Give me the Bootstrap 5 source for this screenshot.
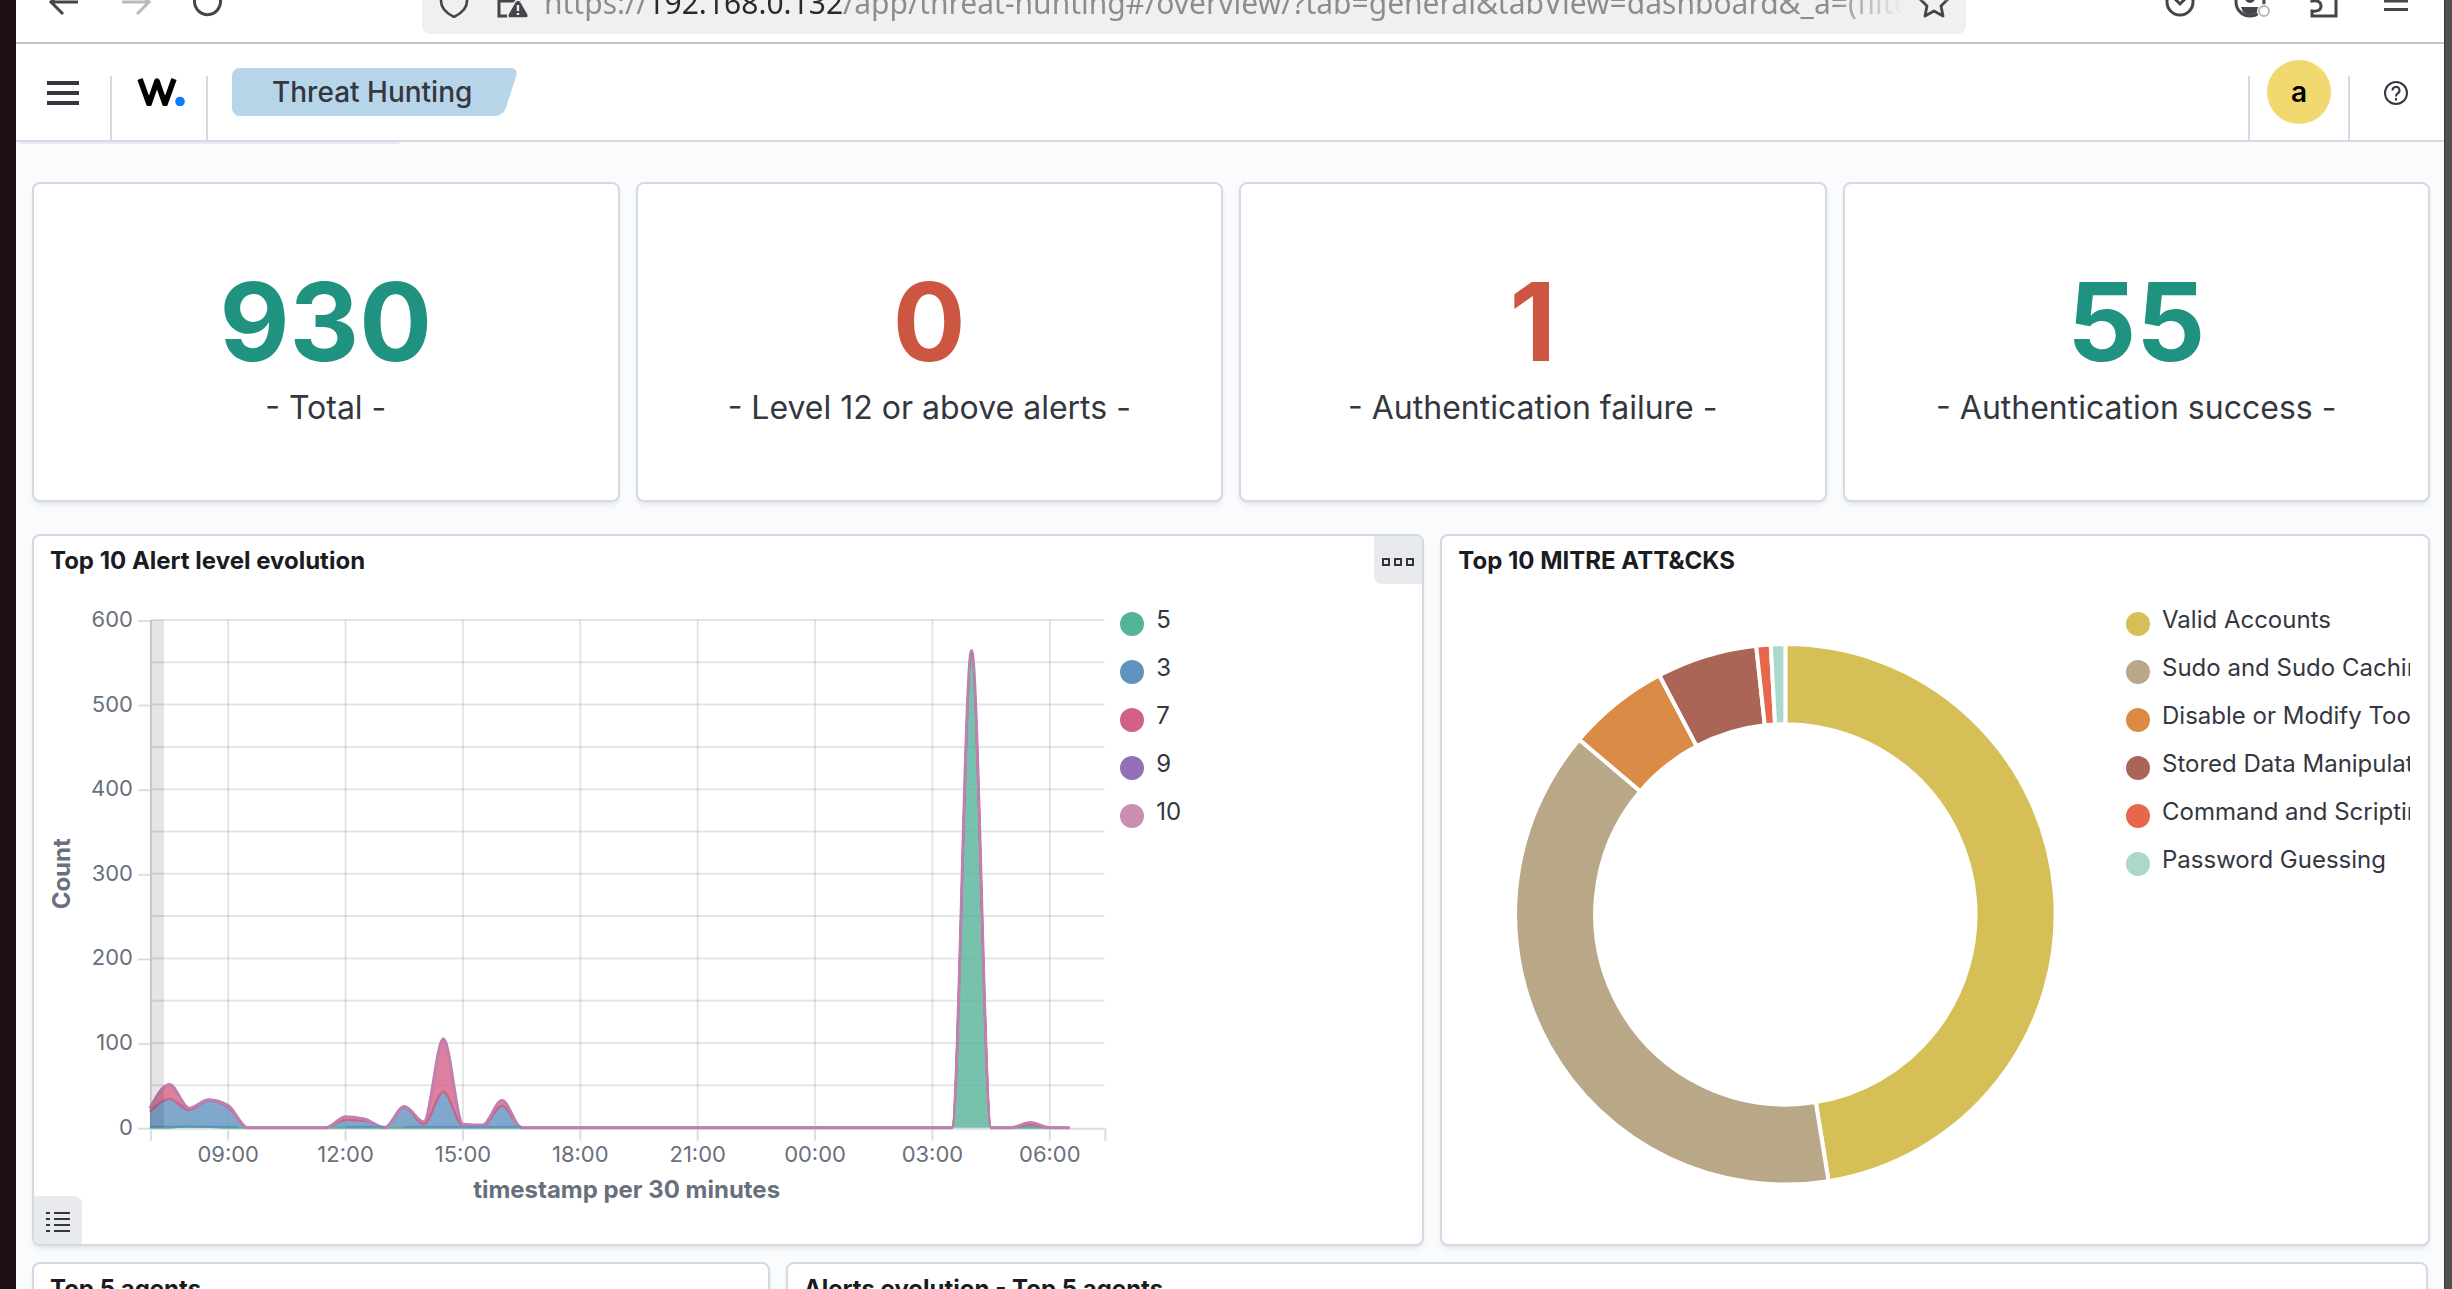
<!DOCTYPE html>
<html lang="en">
<head>
<meta charset="utf-8">
<meta name="viewport" content="width=device-width, initial-scale=1">
<title>Threat Hunting</title>
<link rel="stylesheet" href="https://cdn.jsdelivr.net/npm/bootstrap@5.3.0/dist/css/bootstrap.min.css">
<style>
  body { font-family: Inter, "Liberation Sans", sans-serif; color: #343741; background: #fff; }
  button { color: inherit; }
  .desktop { height: 100vh; background: #505050; border-left: 16px solid #1c1016; padding-right: 8px; }
  .browser { background: #fafbfd; box-shadow: 1px 0 0 #333; }

  /* browser toolbar */
  .toolbar { height: 44px; padding: 0 12px; border-bottom: 2px solid #c6c6c6; background: #fff; flex: none; }
  .tool { width: 72px; height: 64px; margin-bottom: 8px; padding: 0; border: 0; background: none; flex: none; color: #45454a; }
  .tool-off { color: #b9b9bb; }
  .address { height: 64px; margin: 0 178px 8px; padding: 0 16px; border-radius: 8px; background: #f0f0f0; min-width: 0; color: #45454a; }
  .address input {
    font: 30px/44px "Noto Sans", "Open Sans", sans-serif; border: 0; outline: 0; padding: 0; min-width: 0; height: 48px;
    color: transparent;
    background: linear-gradient(90deg, #8c8c8e 106px, #2a2a2e 106px, #2a2a2e 300px, #8c8c8e 300px, #8c8c8e 1290px, transparent 1360px);
    -webkit-background-clip: text; background-clip: text;
  }

  /* application header */
  .app-header { height: 98px; border-bottom: 2px solid #d3dae6; background: #fff; flex: none; }
  .app-header button { border: 0; background: none; padding: 0; }
  .menu-btn { width: 94px; height: 60px; padding-left: 2px; }
  .rule { width: 2px; height: 64px; background: #d3dae6; align-self: flex-end; }
  .brand-link { width: 94px; }
  .crumb { position: relative; isolation: isolate; margin-left: 24px; height: 48px; padding: 0 48px 0 40px;
    font-size: 28px; line-height: 48px; font-weight: 500; color: #343741; text-decoration: none; }
  .crumb::before, .crumb::after { content: ""; position: absolute; z-index: -1; top: 0; bottom: 0; background: #b6d5e9; border-radius: 8px; }
  .crumb::before { left: 0; right: 50%; }
  .crumb::after { left: 30%; right: 10px; transform: skewX(-18deg); }
  .avatar { width: 64px; height: 64px; border-radius: 50%; background: #f1d86f; color: #000; font-size: 28px; line-height: 64px; font-weight: 600; }
  .user-btn { width: 98px; }
  .help-btn { width: 94px; padding-right: 2px !important; }

  /* dashboard */
  .under-shadow { width: 380px; height: 2px; margin-left: 3px; background: #e9ebf1; }
  .board { padding: 38px 14px 0 16px; }
  .tile { background: #fff; border: 2px solid #d3dae6; border-radius: 8px; min-width: 0;
    box-shadow: 0 2px 4px -1px rgba(0,0,0,.08), 0 5px 8px -2px rgba(0,0,0,.05); }
  .gap-tiles { gap: 16px; }
  .stat-tile { flex: 1 1 0; height: 320px; padding-top: 16px; }
  .stat-value { font-size: 108px; line-height: 108px; font-weight: 700; color: #209280; }
  .stat-value.is-bad { color: #cc5642; }
  .stat-label { font-size: 32px; line-height: 48px; margin-top: 8px; }
  .vis-tile { position: relative; height: 712px; overflow: hidden; }
  .w-alert { flex: 1393 1 0; }
  .w-mitre { flex: 989 1 0; }
  .w-agents { flex: 736 1 0; }
  .w-evo { flex: 1643 1 0; margin-right: 2px; }
  .tile-title { margin: 0; padding: 2px 0 0 16px; font-size: 24px; line-height: 46px; font-weight: 700; color: #1a1c21; }
  .tile-opt { position: absolute; width: 48px; height: 48px; padding: 0; border: 0; background: #e9eaec; }
  .opt-menu { top: 0; right: 0; border-radius: 0 6px 0 8px; line-height: 40px; }
  .opt-legend { bottom: 0; left: 0; border-radius: 0 8px 0 6px; line-height: 40px; }
  .plot { flex: 1 1 0; min-width: 0; }
  .plot svg { width: 100%; height: auto; display: block; }
  .legend-list { margin: 16px 0 0; padding: 0 0 0 12px; list-style: none; font-size: 24px; }
  .legend-a { width: 314px; }
  .legend-m { width: 296px; margin-right: 18px; }
  .legend-list li { height: 48px; overflow: hidden; white-space: nowrap; }
  .legend-list i { width: 24px; height: 24px; border-radius: 50%; flex: none; margin-right: 12px; }
  .legend-list span { padding-bottom: 8px; }
  .tick-text { font: 22px Inter, sans-serif; fill: #69707d; }
  .axis-title { font: 700 24px Inter, sans-serif; fill: #69707d; }
</style>
<script src="https://cdn.jsdelivr.net/npm/bootstrap@5.3.0/dist/js/bootstrap.bundle.min.js"></script>
</head>
<body>
<div class="desktop overflow-hidden">
<div class="browser d-flex flex-column h-100 overflow-hidden">

  <div class="toolbar d-flex align-items-end overflow-hidden">
    <button class="tool" aria-label="Back"><svg width="32" height="32" fill="none" stroke="currentColor" stroke-width="3"><path d="M30 16H3M15 4 3 16l12 12"/></svg></button>
    <button class="tool tool-off" aria-label="Forward"><svg width="32" height="32" fill="none" stroke="currentColor" stroke-width="3"><path d="M2 16h27M17 4l12 12-12 12"/></svg></button>
    <button class="tool" aria-label="Reload"><svg width="32" height="32" fill="none" stroke="currentColor" stroke-width="3"><path d="M28 12a13 13 0 1 1-5-7M28 2v10H18"/></svg></button>
    <div class="address flex-grow-1 d-flex align-items-center">
      <svg width="32" height="32" fill="none" stroke="currentColor" stroke-width="2.6"><path d="M16 2 3 7v8c0 7 5 12 13 16 8-4 13-9 13-16V7z"/></svg>
      <svg class="ms-4" width="34" height="34" fill="none" stroke="currentColor" stroke-width="3"><path d="M13 31H5V16h22M9 15V9a6 6 0 0 1 12 0v6"/><path fill="currentColor" stroke="#f0f0f0" stroke-width="1.5" d="M24 15q2 0 3 2l7 12q1 4-2 4H16q-3 0-2-4l7-12q1-2 3-2z"/><path stroke="#f0f0f0" stroke-width="2.4" d="M24 20v6M24 28v2"/></svg>
      <input class="flex-grow-1 ms-3" aria-label="Address" value="https://192.168.0.132/app/threat-hunting#/overview/?tab=general&amp;tabView=dashboard&amp;_a=(filters">
      <svg width="32" height="32" fill="none" stroke="currentColor" stroke-width="2.800" stroke-linejoin="round"><path d="m16 3 4 9 10 1-7 7 2 10-9-5-9 5 2-10-7-7 10-1z"/></svg>
    </div>
    <button class="tool" aria-label="Save to Pocket"><svg width="32" height="32" fill="none" stroke="currentColor" stroke-width="3"><path d="M3 4h26v12a13 13 0 0 1-26 0zM10 12l6 6 6-6"/></svg></button>
    <button class="tool" aria-label="Account"><svg width="38" height="34" fill="none"><circle cx="17" cy="17" r="14" stroke="currentColor" stroke-width="3"/><circle cx="17" cy="13" r="5" fill="currentColor"/><path d="M8 22h18l-2 5q-7 6-14 0z" fill="currentColor"/><circle cx="31" cy="26" r="7" fill="#fff"/><circle cx="31" cy="26" r="5" stroke="#b9b9bb" stroke-width="2"/></svg></button>
    <button class="tool" aria-label="Extensions"><svg width="32" height="34" fill="none" stroke="currentColor" stroke-width="3"><path d="M4 9h7V6a4 4 0 0 1 8 0v3h9v22H4v-5q9 1 9-5t-9-5z"/></svg></button>
    <button class="tool" aria-label="Menu"><svg width="24" height="32" fill="none" stroke="currentColor" stroke-width="3"><path d="M0 7h24M0 15h24M0 23.500h24"/></svg></button>
  </div>

  <header class="app-header d-flex align-items-center">
    <button class="menu-btn" aria-label="Toggle navigation"><svg width="32" height="24" fill="#343741"><path d="M0 0h32v4H0zM0 10h32v4H0zM0 20h32v4H0z"/></svg></button>
    <span class="rule"></span>
    <a class="brand-link d-flex justify-content-center ps-1" href="#" aria-label="Home"><svg width="48" height="28"><path d="M3 1 12 26 20 3l8 23L37 1" fill="none" stroke="#000" stroke-width="5.500" stroke-linejoin="round"/><circle cx="43" cy="23.500" r="4.800" fill="#0a7cff"/></svg></a>
    <span class="rule"></span>
    <a class="crumb" href="#">Threat Hunting</a>
    <span class="rule ms-auto"></span>
    <button class="user-btn d-flex justify-content-center" aria-label="Account menu"><span class="avatar">a</span></button>
    <span class="rule"></span>
    <button class="help-btn" aria-label="Help"><svg width="24" height="24" fill="none" stroke="#343741" stroke-width="2"><circle cx="12" cy="12" r="11"/><path d="M8.500 9.500a3.500 3.500 0 1 1 5 3q-1.500 1-1.500 3M12 17v2.500"/></svg></button>
  </header>

  <main class="flex-grow-1">
    <div class="under-shadow"></div>
    <div class="board">
      <div class="d-flex gap-tiles">
        <div class="tile stat-tile d-flex flex-column justify-content-center text-center"><div class="stat-value">930</div><div class="stat-label">- Total -</div></div>
        <div class="tile stat-tile d-flex flex-column justify-content-center text-center"><div class="stat-value is-bad">0</div><div class="stat-label">- Level 12 or above alerts -</div></div>
        <div class="tile stat-tile d-flex flex-column justify-content-center text-center"><div class="stat-value is-bad">1</div><div class="stat-label">- Authentication failure -</div></div>
        <div class="tile stat-tile d-flex flex-column justify-content-center text-center"><div class="stat-value">55</div><div class="stat-label">- Authentication success -</div></div>
      </div>

      <div class="d-flex gap-tiles mt-4 pt-2">
        <section class="tile vis-tile w-alert">
          <h2 class="tile-title">Top 10 Alert level evolution</h2>
          <button class="tile-opt opt-menu" aria-label="Panel options"><svg width="32" height="8" fill="none" stroke="#343741" stroke-width="2"><path d="M1 1h6v6H1zM13 1h6v6h-6zM25 1h6v6h-6z"/></svg></button>
          <div class="d-flex align-items-start">
            <div class="plot"><svg id="levels" viewBox="0 0 1075 628" role="img" aria-label="Alert count by level over time"></svg></div>
            <ul class="legend-list legend-a" id="legendLevels"></ul>
          </div>
          <button class="tile-opt opt-legend" aria-label="Toggle legend"><svg width="24" height="20" stroke="#343741" stroke-width="2"><path d="M0 1h4M8 1h16M0 7h4M8 7h16M0 13h4M8 13h16M0 19h4M8 19h16"/></svg></button>
        </section>
        <section class="tile vis-tile w-mitre">
          <h2 class="tile-title">Top 10 MITRE ATT&amp;CKS</h2>
          <div class="d-flex align-items-start">
            <div class="plot"><svg id="mitre" viewBox="0 0 671 628" role="img" aria-label="Share of MITRE techniques"></svg></div>
            <ul class="legend-list legend-m" id="legendMitre"></ul>
          </div>
        </section>
      </div>

      <div class="d-flex gap-tiles mt-3">
        <section class="tile vis-tile w-agents"><h2 class="tile-title">Top 5 agents</h2></section>
        <section class="tile vis-tile w-evo"><h2 class="tile-title">Alerts evolution - Top 5 agents</h2></section>
      </div>
    </div>
  </main>
</div>
</div>

<script>
  // ---- stacked area chart: one point per 30 minutes from 07:00 ----
  const L = 116, R = 1071, T = 36, B = 544, HOUR = 39.15;
  const X = i => L + i * HOUR / 2, Y = v => B - v * (B - T) / 600;
  const n = 48;
  const series = values => Array.from({ length: n }, (_, i) => values[i] || 0);
  const top5 = series({ 2: 2, 3: 1, 42: 556 });
  const top3 = series({ 0: 19, 1: 34, 2: 21, 3: 32, 4: 24, 10: 9, 11: 8, 13: 24, 14: 4, 15: 42, 16: 2, 17: 1, 18: 26, 42: 560, 45: 3 });
  const top7 = series({ 0: 23, 1: 51, 2: 23, 3: 33, 4: 26, 10: 13, 11: 10, 13: 25, 14: 7, 15: 105, 16: 4, 17: 3, 18: 32, 42: 564, 45: 6 });
  const zero = series({});

  // monotone cubic segments through the points
  function segs(pts) {
    const m = pts.map((p, i) => {
      if (!i || i === pts.length - 1) return null;
      const a = (p[1] - pts[i - 1][1]) / (p[0] - pts[i - 1][0]);
      const b = (pts[i + 1][1] - p[1]) / (pts[i + 1][0] - p[0]);
      return (Math.sign(a) + Math.sign(b)) * Math.min(Math.abs(a), Math.abs(b), Math.abs(a + b) / 4) || 0;
    });
    const k = pts.length - 1;
    m[0] = (3 * (pts[1][1] - pts[0][1]) / (pts[1][0] - pts[0][0]) - m[1]) / 2;
    m[k] = 0;
    let d = '';
    for (let i = 0; i < k; i++) {
      const h = (pts[i + 1][0] - pts[i][0]) / 3;
      d += `C${pts[i][0] + h} ${pts[i][1] + m[i] * h} ${pts[i + 1][0] - h} ${pts[i + 1][1] - m[i + 1] * h} ${pts[i + 1][0]} ${pts[i + 1][1]}`;
    }
    return d;
  }
  const pts = s => s.map((v, i) => [X(i), Y(v)]);
  const line = s => { const p = pts(s); return `M${p[0]}` + segs(p); };
  function area(lo, hi) {
    const a = pts(hi), b = pts(lo);
    const back = segs(b).match(/-?[\d.e-]+/g).map(Number);
    let d = `M${a[0]}` + segs(a) + `L${b[b.length - 1]}`;
    for (let j = back.length - 6; j >= 0; j -= 6) {
      const start = j ? [back[j - 2], back[j - 1]] : b[0];
      d += `C${back[j + 2]} ${back[j + 3]} ${back[j]} ${back[j + 1]} ${start[0]} ${start[1]}`;
    }
    return d + 'Z';
  }

  let g = '';
  for (let v = 0; v <= 600; v += 50) {
    if (v) g += `<path d="M${L} ${Y(v)}H${R}" stroke="#343741" stroke-opacity=".13" stroke-width="2"/>`;
    if (v % 100 === 0) g += `<path d="M${L - 12} ${Y(v) + 1}h12" stroke="#dcdde0" stroke-width="2"/><text class="tick-text" x="${L - 17}" y="${Y(v) + 7}" text-anchor="end">${v}</text>`;
  }
  ['09:00', '12:00', '15:00', '18:00', '21:00', '00:00', '03:00', '06:00'].forEach((t, i) => {
    const x = X(4 + i * 6);
    g += `<path d="M${x} ${T}V${B}" stroke="#343741" stroke-opacity=".13" stroke-width="2"/><path d="M${x} ${B}v13" stroke="#dcdde0" stroke-width="2"/><text class="tick-text" x="${x}" y="${B + 34}" text-anchor="middle">${t}</text>`;
  });
  g += `<path d="M${L + 1} ${T}V${B + 13}M${R + 1} ${B}v13M${L} ${B + 1}H${R + 2}" stroke="#dcdde0" stroke-width="2" fill="none"/>`;
  g += `<path d="${area(zero, top5)}" fill="#54b399" fill-opacity=".8"/><path d="${area(top5, top3)}" fill="#6092c0" fill-opacity=".8"/><path d="${area(top3, top7)}" fill="#d36086" fill-opacity=".8"/>`;
  g += `<g fill="none" stroke-width="2"><path d="${line(top5)}" stroke="#54b399"/><path d="${line(top3)}" stroke="#6092c0"/><path d="${line(top3)}" stroke="#d36086"/><path d="${line(top7)}" stroke="#c07fae" stroke-width="3"/></g>`;
  g += `<path d="M${L} ${B - 1}H${L + 88}M${X(10)} ${B - 1}H${X(12)}M${X(13)} ${B - 1}H${X(19)}" stroke="#6092c0" stroke-width="2"/>`;
  g += `<rect x="${L}" y="${T}" width="14" height="${B - T}" fill="#000" fill-opacity=".1"/>`;
  g += `<text class="axis-title" x="593" y="${B + 70}" text-anchor="middle">timestamp per 30 minutes</text>`;
  g += `<text class="axis-title" transform="translate(36 290) rotate(-90)" text-anchor="middle">Count</text>`;
  document.getElementById('levels').innerHTML = g;

  // ---- donut ----
  const slices = [['Valid Accounts', 170.8, '#d6bf57'], ['Sudo and Sudo Caching', 310.3, '#b9a888'], ['Disable or Modify Tools', 332.2, '#da8b45'],
    ['Stored Data Manipulation', 353.8, '#aa6556'], ['Command and Scripting Interpreter', 356.9, '#e7664c'], ['Password Guessing', 360, '#aad9cc']];
  const cx = 343, cy = 330, r1 = 270, r0 = 190;
  const at = (deg, r) => { const a = deg * Math.PI / 180; return `${cx + r * Math.sin(a)} ${cy - r * Math.cos(a)}`; };
  let from = 0;
  document.getElementById('mitre').innerHTML = slices.map(([, to, c]) => {
    const big = to - from > 180 ? 1 : 0;
    const d = `M${at(from, r1)}A${r1} ${r1} 0 ${big} 1 ${at(to, r1)}L${at(to, r0)}A${r0} ${r0} 0 ${big} 0 ${at(from, r0)}Z`;
    from = to;
    return `<path d="${d}" fill="${c}" stroke="#fff" stroke-width="4"/>`;
  }).join('');

  const legend = (id, items) => document.getElementById(id).innerHTML = items.map(([t, c]) =>
    `<li class="d-flex align-items-center"><i style="background:${c}"></i><span>${t}</span></li>`).join('');
  legend('legendLevels', [['5', '#54b399'], ['3', '#6092c0'], ['7', '#d36086'], ['9', '#9170b8'], ['10', '#ca8eae']]);
  legend('legendMitre', slices.map(s => [s[0], s[2]]));
</script>
</body>
</html>
